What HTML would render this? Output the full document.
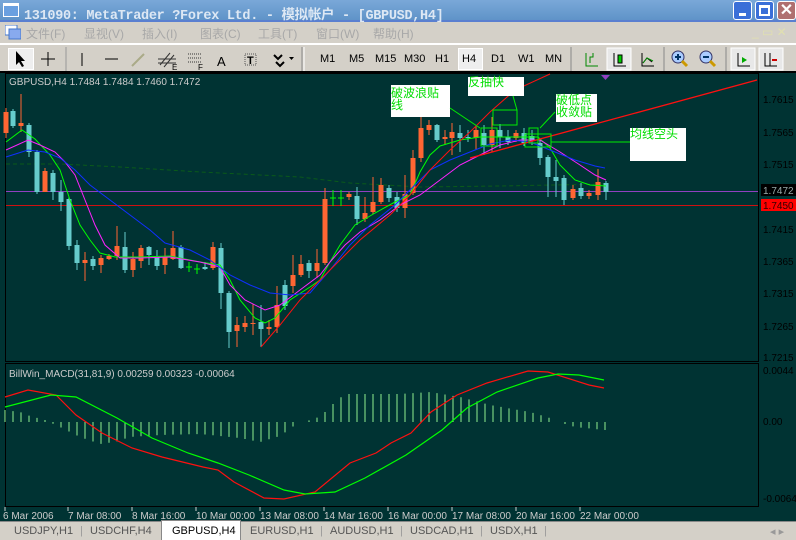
<!DOCTYPE html>
<html><head><meta charset="utf-8"><style>
*{margin:0;padding:0;box-sizing:border-box}
body{width:796px;height:540px;overflow:hidden;background:#d4d0c8;font-family:"Liberation Sans","Noto Sans CJK SC",sans-serif;position:relative}
.title{position:absolute;left:0;top:0;width:796px;height:22px;background:linear-gradient(#7aa8d8,#5f93c8);border-bottom:2px solid #5a7fd0}
.title .t{position:absolute;left:24px;top:3px;color:#dde8f4;font:bold 13.5px "Liberation Mono","Noto Sans CJK SC",monospace;white-space:nowrap;letter-spacing:-0.3px}
.wb{position:absolute;top:1px;width:19px;height:19px;border:1px solid #fff;border-radius:3px}
.menu{position:absolute;left:0;top:24px;width:796px;height:19px;color:#a8a8a8;font-size:12px}
.menu span{position:absolute;top:1px}
.tb{position:absolute;left:0;top:43px;width:796px;height:28px;border-top:2px solid #fff}
.tb .b{position:absolute;top:3px;font-size:11px;color:#000}
.chart{position:absolute;left:0;top:71px;width:796px;height:450px;background:#003333;border-top:2px solid #000}
.tabs{position:absolute;left:0;top:521px;width:796px;height:19px;background:#d4d0c8;border-top:1px solid #888;font-size:11px;color:#555}
.tabs span{position:absolute;top:3px}
</style></head><body>
<div class="title">
<svg style="position:absolute;left:3px;top:3px" width="16" height="14"><rect x="0" y="0" width="16" height="14" fill="#fff"/><rect x="1" y="3" width="14" height="10" fill="#6aa0e0"/></svg>
<div class="t">131090: MetaTrader ?Forex Ltd. - 模拟帐户 - [GBPUSD,H4]</div>
<div class="wb" style="left:733px;background:#3a6fd8"><div style="position:absolute;left:5px;top:11px;width:7px;height:3px;background:#fff"></div></div>
<div class="wb" style="left:755px;background:#3a6fd8"><div style="position:absolute;left:3px;top:3px;width:11px;height:11px;border:2px solid #fff;border-top-width:3px"></div></div>
<div class="wb" style="left:777px;background:#b07070;color:#fff;font:bold 16px sans-serif;text-align:center;line-height:17px">✕</div>
</div>
<div class="menu">
<svg style="position:absolute;left:5px;top:1px" width="16" height="15"><rect x="0" y="0" width="12" height="10" fill="#fff" stroke="#4477cc"/><rect x="4" y="4" width="12" height="10" fill="#88aaee" stroke="#4477cc"/></svg>
<span style="left:26px">文件(F)</span><span style="left:84px">显视(V)</span><span style="left:142px">插入(I)</span><span style="left:200px">图表(C)</span><span style="left:258px">工具(T)</span><span style="left:316px">窗口(W)</span><span style="left:373px">帮助(H)</span>
<span style="left:752px;color:#e0e0b0">_ ▭ ✕</span>
</div>
<div class="tb">
<div style="position:absolute;left:8px;top:3px;width:26px;height:22px;background:#eee;border:1px solid #fff"></div>
<svg style="position:absolute;left:0;top:0" width="796" height="28">
<path d="M16 6 L16 20 L19 17 L22 22 L24 21 L21 16 L25 16 Z" fill="#000"/>
<path d="M48 7v14M41 14h14" stroke="#000"/>
<line x1="66" y1="2" x2="66" y2="26" stroke="#999"/>
<path d="M82 8v13M105 14h13" stroke="#000"/><path d="M132 21l12-12" stroke="#aa8" stroke-width="2"/>
<path d="M160 20l10-12M164 22l10-12M158 14h18M158 18h18" stroke="#333"/><text x="172" y="25" font-size="8" font-family="Liberation Sans">E</text>
<path d="M188 9h14M188 13h14M188 17h14" stroke="#333" stroke-dasharray="1 1"/><text x="198" y="25" font-size="8" font-family="Liberation Sans">F</text>
<text x="217" y="21" font-size="13" font-family="Liberation Sans">A</text>
<rect x="245" y="9" width="11" height="11" fill="none" stroke="#555" stroke-dasharray="1 1"/><text x="247" y="19" font-size="11" font-weight="bold" font-family="Liberation Sans">T</text>
<path d="M274 10l4 4l4-4M276 17l4 4l4-4" stroke="#000" stroke-width="2" fill="none"/><path d="M289 12h5l-2.5 3z"/>
<line x1="302" y1="2" x2="302" y2="26" stroke="#888"/><line x1="304" y1="2" x2="304" y2="26" stroke="#fff"/>
<line x1="571" y1="2" x2="571" y2="26" stroke="#888"/>
<path d="M586 8v13h12M590 18v-6h3v-4" stroke="#080" fill="none"/>
<rect x="607" y="3" width="24" height="22" fill="#e8e8e8" stroke="#fff"/>
<path d="M614 8v13h12" stroke="#000" fill="none"/><rect x="618" y="10" width="4" height="8" fill="#0c0" stroke="#000"/>
<path d="M642 8v13h12M643 18l4-5l5 4" stroke="#000" fill="none"/><path d="M643 18l4-5l6 3" stroke="#080" fill="none"/>
<line x1="664" y1="2" x2="664" y2="26" stroke="#888"/>
<circle cx="678" cy="12" r="6" fill="#aaccff" stroke="#336"/><path d="M675 12h6M678 9v6" stroke="#036" stroke-width="2"/><path d="M682 16l5 5" stroke="#c90" stroke-width="3"/>
<circle cx="706" cy="12" r="6" fill="#aaccff" stroke="#336"/><path d="M703 12h6" stroke="#036" stroke-width="2"/><path d="M710 16l5 5" stroke="#c90" stroke-width="3"/>
<line x1="726" y1="2" x2="726" y2="26" stroke="#888"/>
<rect x="731" y="3" width="24" height="22" fill="#e8e8e8" stroke="#fff"/><path d="M738 8v13h12" stroke="#000" fill="none"/><path d="M742 12l5 3l-5 3z" fill="#0a0"/>
<rect x="759" y="3" width="24" height="22" fill="#e8e8e8" stroke="#fff"/><path d="M765 8v13h12M770 8v13" stroke="#000" fill="none"/><path d="M772 15h5" stroke="#c00" stroke-width="2"/>
</svg>
<span class="b" style="left:320px;top:8px">M1</span><span class="b" style="left:349px;top:8px">M5</span><span class="b" style="left:375px;top:8px">M15</span><span class="b" style="left:404px;top:8px">M30</span><span class="b" style="left:435px;top:8px">H1</span>
<div style="position:absolute;left:458px;top:3px;width:25px;height:22px;background:#eee;border:1px solid #fff"></div><span class="b" style="left:462px;top:8px">H4</span>
<span class="b" style="left:491px;top:8px">D1</span><span class="b" style="left:518px;top:8px">W1</span><span class="b" style="left:545px;top:8px">MN</span>
</div>
<div class="chart"></div>
<svg id="c" style="position:absolute;left:0;top:0" width="796" height="540" font-family="Liberation Sans" font-size="10">
<rect x="5.5" y="73.5" width="753" height="288" fill="none" stroke="#000"/>
<rect x="5.5" y="363.5" width="753" height="143" fill="none" stroke="#000"/>
<g fill="#000">
<text x="763" y="103">1.7615</text><text x="763" y="136">1.7565</text><text x="763" y="168">1.7515</text>
<text x="763" y="233">1.7415</text><text x="763" y="265">1.7365</text><text x="763" y="297">1.7315</text><text x="763" y="330">1.7265</text><text x="763" y="361">1.7215</text>
<text x="763" y="374">0.0044</text><text x="763" y="425">0.00</text><text x="763" y="502">-0.00645</text>
</g>
<rect x="761" y="184" width="35" height="12" fill="#000"/><text x="763" y="194" fill="#9aa">1.7472</text>
<rect x="761" y="199" width="35" height="12" fill="#f00"/><text x="763" y="209" fill="#300">1.7450</text>
<text x="9" y="85" fill="#ccc">GBPUSD,H4  1.7484 1.7484 1.7460 1.7472</text>
<text x="9" y="377" fill="#ccc">BillWin_MACD(31,81,9) 0.00259 0.00323 -0.00064</text>
<g fill="#ccc"><text x="3" y="519">6 Mar 2006</text><text x="68" y="519">7 Mar 08:00</text><text x="132" y="519">8 Mar 16:00</text><text x="196" y="519">10 Mar 00:00</text><text x="260" y="519">13 Mar 08:00</text><text x="324" y="519">14 Mar 16:00</text><text x="388" y="519">16 Mar 00:00</text><text x="452" y="519">17 Mar 08:00</text><text x="516" y="519">20 Mar 16:00</text><text x="580" y="519">22 Mar 00:00</text></g>
<polyline points="6,164 60,164 120,167 200,172 300,177 350,183 420,187 500,186 606,184" fill="none" stroke="#0a5a1a" stroke-dasharray="4 3"/>
<line x1="6" y1="191.5" x2="758" y2="191.5" stroke="#9040c0"/>
<line x1="6" y1="205.5" x2="758" y2="205.5" stroke="#d01010"/>
<g id="cand"></g>
<polyline fill="none" stroke="#00ff00" points="6,142 22,130 35,139 50,155 60,170 70,200 80,225 90,240 100,253 115,257 140,257 170,256 200,262 220,265 230,280 240,300 255,318 265,323 275,318 290,300 310,287 320,280 330,262 340,245 355,225 375,213 395,202 410,195 420,172 430,155 440,146 460,140 480,137 500,137 520,137 538,137 550,148 560,165 575,180 590,185 606,186"/>
<polyline fill="none" stroke="#ff22ff" points="6,150 28,140 40,145 55,152 65,162 75,175 85,200 95,225 105,245 120,258 140,258 170,257 200,262 220,267 230,285 245,300 265,310 280,305 300,290 320,275 330,262 345,245 360,232 380,220 400,205 420,195 440,180 460,165 480,155 500,145 520,140 540,140 560,152 580,165 595,175 606,180"/>
<polyline fill="none" stroke="#1030ff" points="6,157 28,150 45,152 60,158 75,170 90,185 110,200 130,215 150,230 165,243 190,250 210,260 230,275 250,285 270,293 290,295 310,293 330,270 350,245 370,225 395,205 415,185 430,170 450,160 470,152 490,144 510,140 530,142 550,150 575,160 595,166 605,168"/>
<polyline fill="none" stroke="#ff1010" points="261,347 280,325 300,300 330,270 360,240 390,215 410,195 430,170 450,150 470,132 490,112 515,90 550,74"/>
<line x1="470" y1="158" x2="757" y2="80" stroke="#ff1010" stroke-width="1.3"/>
<path d="M601 75h9l-4.5 5z" fill="#9040c0"/>
<g fill="#fff"><rect x="391" y="85" width="59" height="32"/><rect x="468" y="77" width="56" height="19"/><rect x="556" y="94" width="41" height="28"/><rect x="630" y="128" width="56" height="33"/></g>
<g fill="#00dd00" font-family="Noto Sans CJK SC,sans-serif" font-size="12"><text x="391" y="97">破波浪贴</text><text x="391" y="109">线</text><text x="468" y="86">反抽快</text><text x="556" y="104">破低点</text><text x="556" y="116">收敛贴</text><text x="630" y="138">均线空头</text></g>
<g fill="none" stroke="#00ee00"><rect x="493" y="110" width="24" height="15"/><rect x="481" y="128" width="16" height="18"/><rect x="529" y="128" width="9" height="15"/><rect x="525" y="134" width="26" height="13"/>
<path d="M450 108L480 128M513 96L517 110M555 112L540 128M551 142H630"/></g>
<g id="hist"></g>
<polyline fill="none" stroke="#ff1010" stroke-width="1.2" points="5,397 28,390 56,395 76,415 102,433 132,448 162,457 203,467 218,470 234,482 264,498 284,499 315,492 350,463 376,453 391,443 411,433 431,412 457,395 487,383 528,371 548,372 589,385 604,388"/>
<polyline fill="none" stroke="#00ff00" stroke-width="1.2" points="5,407 51,395 76,397 117,418 152,438 188,453 218,463 249,475 284,490 305,494 335,492 365,478 406,455 442,430 467,408 497,392 538,378 558,374 579,375 604,380"/>
<g stroke="#ccc"><path d="M5 507v4M68 507v4M132 507v4M196 507v4M260 507v4M324 507v4M388 507v4M452 507v4M516 507v4M580 507v4"/></g>
</svg>
<div class="tabs">
<div style="position:absolute;left:161px;top:-2px;width:80px;height:20px;background:#fff;border:1px solid #888;border-bottom:none"></div>
<span style="left:14px">USDJPY,H1</span><span style="left:90px">USDCHF,H4</span><span style="left:172px;color:#000">GBPUSD,H4</span><span style="left:250px">EURUSD,H1</span><span style="left:330px">AUDUSD,H1</span><span style="left:410px">USDCAD,H1</span><span style="left:490px">USDX,H1</span>
<span style="left:80px;color:#999">|</span><span style="left:320px;color:#999">|</span><span style="left:400px;color:#999">|</span><span style="left:480px;color:#999">|</span><span style="left:544px;color:#999">|</span>
<span style="left:770px;color:#999">◂ ▸</span>
</div>
<script>
var C=[[6,112,133,108,138,1],[13,111,126,109,128,0],[21,123,126,94,132,1],[29,125,152,123,157,0],[37,152,192,150,194,0],[45,171,192,168,192,1],[53,173,192,170,200,0],[61,192,202,180,211,0],[69,199,246,197,250,0],[77,245,263,240,270,0],[85,260,263,252,281,1],[93,259,266,256,270,0],[101,258,265,255,273,1],[109,256,259,254,260,1],[117,246,256,226,260,1],[125,247,270,232,273,0],[133,259,270,252,277,1],[141,248,261,245,268,1],[149,247,255,246,265,0],[157,257,266,250,270,0],[165,257,265,248,274,1],[173,248,259,231,260,1],[181,247,268,245,269,0],[189,267,267,262,272,2],[197,269,269,264,274,2],[205,267,269,262,270,0],[213,247,268,242,270,1],[221,248,293,243,309,0],[229,293,332,291,348,0],[237,325,331,317,347,1],[245,323,327,316,332,1],[253,323,324,304,335,1],[261,322,329,305,347,0],[269,327,329,320,335,1],[277,305,327,286,333,1],[285,285,306,280,310,0],[293,275,286,255,293,1],[301,264,275,255,277,1],[309,263,271,260,278,0],[317,263,271,249,278,1],[325,199,263,188,265,1],[333,198,198,190,206,2],[341,198,198,190,206,2],[349,194,197,192,200,1],[357,196,219,187,225,0],[365,213,219,197,222,1],[373,202,212,177,214,1],[381,185,202,178,204,1],[389,188,198,185,202,0],[397,197,208,192,212,0],[405,194,208,175,218,1],[413,158,193,150,195,1],[421,128,158,117,162,1],[429,125,130,120,135,1],[437,125,140,124,142,0],[445,137,139,130,145,1],[452,132,138,123,155,1],[460,133,138,125,152,0],[468,137,137,130,142,0],[476,130,138,125,150,1],[484,133,145,125,155,0],[492,130,145,117,152,1],[500,130,137,124,148,0],[508,137,142,130,145,0],[516,133,138,130,142,1],[524,133,143,128,146,0],[532,136,141,130,145,0],[540,143,158,140,165,0],[548,157,177,155,197,0],[556,177,181,160,197,0],[564,178,200,175,205,0],[573,189,198,185,200,1],[581,188,196,183,199,0],[589,193,196,190,199,1],[598,182,195,169,200,1],[606,183,192,181,200,0]];
var s='';C.forEach(function(c){var col=c[5]==1?'#ff6633':(c[5]==2?'#00ff00':'#66cccc');s+='<line x1="'+c[0]+'" y1="'+c[3]+'" x2="'+c[0]+'" y2="'+c[4]+'" stroke="'+col+'"/>';var h=Math.max(c[2]-c[1],1);if(c[5]==2)s+='<line x1="'+(c[0]-3)+'" y1="'+c[1]+'" x2="'+(c[0]+3)+'" y2="'+c[1]+'" stroke="'+col+'"/>';else s+='<rect x="'+(c[0]-2.5)+'" y="'+c[1]+'" width="5" height="'+h+'" fill="'+col+'"/>';});
document.getElementById('cand').innerHTML=s;
var P=[[5,-12],[20,-10],[30,-6],[45,-2],[60,5],[80,15],[100,22],[115,20],[130,15],[160,13],[200,12],[240,16],[260,20],[280,14],[295,3],[302,0],[315,-3],[325,-10],[335,-20],[345,-28],[400,-28],[430,-30],[460,-25],[490,-17],[530,-10],[550,-4],[558,0],[565,2],[575,5],[605,8]];
function v(x){for(var i=0;i<P.length-1;i++){if(x>=P[i][0]&&x<=P[i+1][0]){var t=(x-P[i][0])/(P[i+1][0]-P[i][0]);return P[i][1]+t*(P[i+1][1]-P[i][1]);}}return 0;}
var h='';for(var x=5;x<=606;x+=8){var y=v(x);if(Math.abs(y)<1)continue;h+='<line x1="'+x+'" y1="422" x2="'+x+'" y2="'+(422+y)+'" stroke="#8fef8f"/>';}
document.getElementById('hist').innerHTML=h;
</script>
</body></html>
